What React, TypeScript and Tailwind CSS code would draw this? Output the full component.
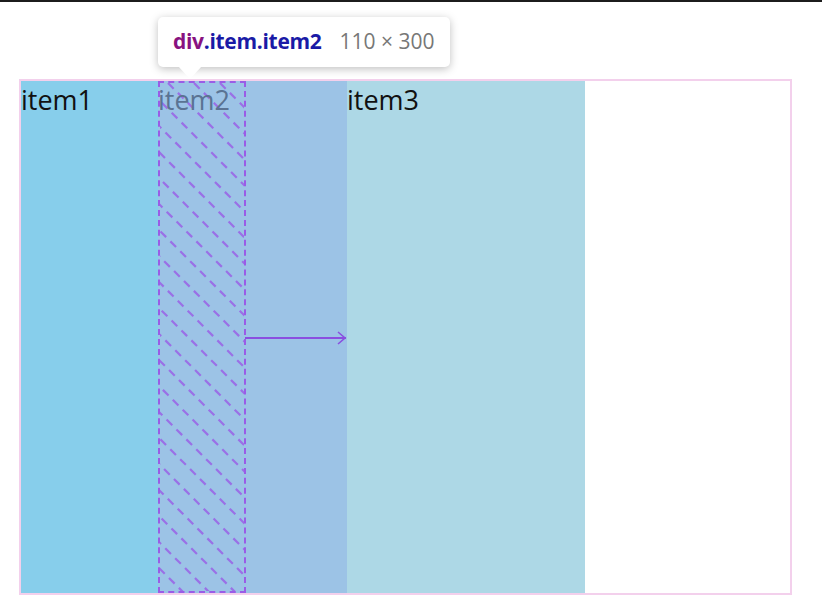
const font = { fontFamily: '"Open Sans", "Noto Sans", sans-serif' }

function Hatch({ w, h }: { w: number; h: number }) {
  const lines = []
  for (let k = -h; k < w + 26; k += 26) {
    lines.push(<line key={k} x1={k} y1={0} x2={k + h} y2={h} />)
  }
  return (
    <svg width={w} height={h} className="absolute inset-0">
      <g stroke="#9a5ce6" strokeWidth="2.2" strokeDasharray="8 6" opacity="0.8">
        {lines}
      </g>
    </svg>
  )
}

export default function App() {
  return (
    <div className="relative w-[822px] h-[595px] bg-white overflow-hidden" style={font}>
      {/* top edge */}
      <div className="h-[2px] bg-[#1c1c1c]" />

      {/* flex container */}
      <div className="ml-[19px] mt-[77px] w-[773px] h-[516px] border-2 border-[#f3d0ec] flex">
        <div className="w-[137px] bg-[#87ceeb] text-[27px] leading-[38px] text-[#111]">item1</div>

        <div className="relative w-[189px] bg-[#9cc3e6]">
          <div className="relative w-[88px] h-full border-2 border-dashed border-[#9a5ce6] overflow-hidden">
            <Hatch w={88} h={512} />
            <span className="relative text-[27px] leading-[34px] text-[#5a7393] -ml-[2px]">item2</span>
          </div>
          {/* flex-grow arrow */}
          <svg width="104" height="14" className="absolute left-[86px] top-[250px]">
            <line x1="1" y1="7" x2="102" y2="7" stroke="#8a4fe0" strokeWidth="2" />
            <polyline points="94,1 101,7 94,13" fill="none" stroke="#8a4fe0" strokeWidth="1.6" />
          </svg>
        </div>

        <div className="w-[238px] bg-[#add8e6] text-[27px] leading-[38px] text-[#111]">item3</div>
      </div>

      {/* inspector tooltip */}
      <div className="absolute left-[158px] top-[17px] w-[292px] h-[50px] bg-white rounded-[5px] shadow-[0_2px_8px_rgba(0,0,0,0.25)] flex items-center pl-[15px] gap-[18px]">
        <span className="text-[21px] font-bold tracking-[-0.3px]">
          <span className="text-[#881280]">div</span>
          <span className="text-[#1a1aa6]">.item.item2</span>
        </span>
        <span className="text-[21px] text-[#777]">110 × 300</span>
      </div>
      <div className="absolute left-[178px] top-[66px] w-0 h-0 border-l-[12px] border-r-[12px] border-t-[13px] border-l-transparent border-r-transparent border-t-white" />
    </div>
  )
}
